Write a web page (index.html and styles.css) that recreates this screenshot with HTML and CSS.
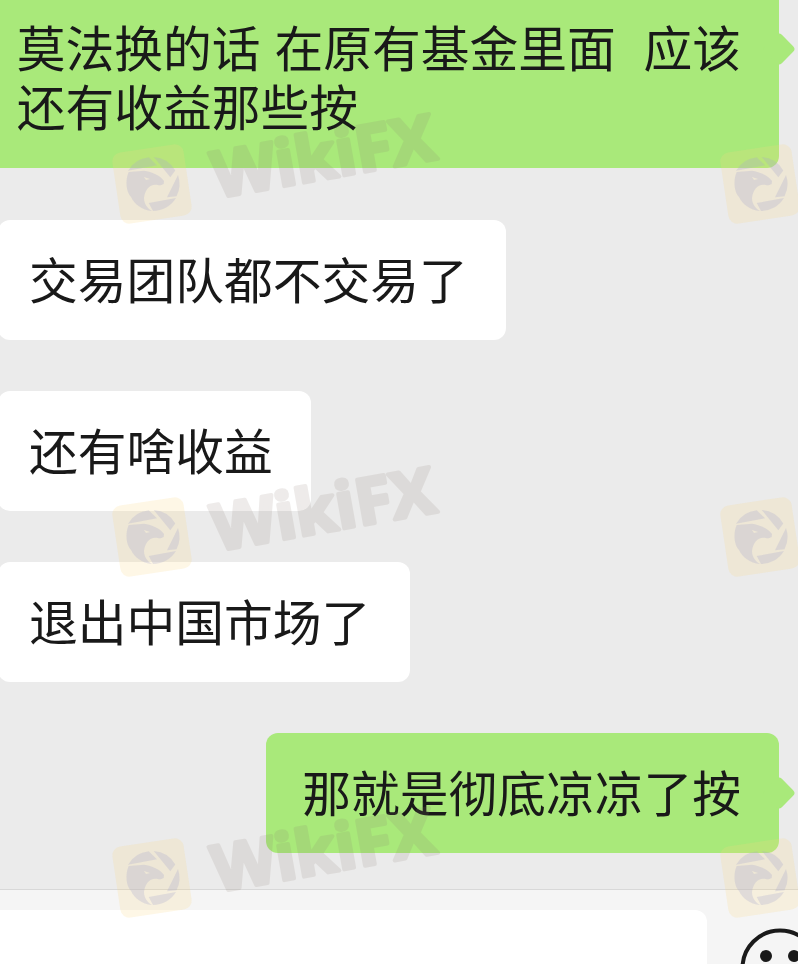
FILE: index.html
```html
<!DOCTYPE html>
<html lang="zh-CN">
<head>
    <meta charset="UTF-8">
    <title>聊天</title>
    <link rel="stylesheet" href="styles.css">
</head>
<body>
<div class="chat">
    <div class="bubble outgoing">莫法换的话 在原有基金里面  应该
还有收益那些按</div>
    <div class="bubble incoming">交易团队都不交易了</div>
    <div class="bubble incoming">还有啥收益</div>
    <div class="bubble incoming roomy">退出中国市场了</div>
    <div class="bubble outgoing">那就是彻底凉凉了按</div>
</div>

<div class="footer">
    <div class="input-box"></div>
    <svg class="smiley" width="80" height="80" viewBox="0 0 80 80">
        <circle cx="40" cy="40" r="37.500" fill="none" stroke="#1a1a1a" stroke-width="4"/>
        <circle cx="26" cy="28" r="6" fill="#1a1a1a"/>
        <circle cx="54" cy="28" r="6" fill="#1a1a1a"/>
    </svg>
</div>

<!-- WikiFX watermark sits over everything -->
<svg class="watermark" width="798" height="964" viewBox="0 0 798 964">
    <defs>
        <g id="wm-logo">
            <rect x="-36" y="-36" width="72" height="72" rx="9" class="wm-plate" transform="rotate(-8.500)"/>
            <path class="wm-mark" fill-rule="evenodd" d="M-24 -13.300A27 27 0 0 1 -3.300 -26.800L5 -18.700ZM1.700 -27A27 27 0 0 1 23.300 -13.500L18.300 -6.700ZM26 -9A27 27 0 0 1 24.500 12.300L15 13.300ZM24 14A27 27 0 0 1 1 27L-3.300 19ZM-23.300 -12L-8 -13.300C0 -12 8 -9 12 -3L11.700 0C8 2 7 1 3.300 .7C-3 1 -7 6 -8 14C-8 20 -4 25 0 27C-10 26 -18 20 -21 13C-26 8 -27 -4 -23.300 -12ZM-8 -7L-2 -5L-6 -4Z"/>
        </g>
        <g id="wm-full">
            <use href="#wm-logo"/>
            <text class="wm-text" textLength="225" lengthAdjust="spacingAndGlyphs" transform="translate(64.500 14) rotate(-10)">WikiFX</text>
        </g>
    </defs>
    <use href="#wm-full" x="152" y="184"/>
    <use href="#wm-full" x="152" y="537"/>
    <use href="#wm-full" x="152" y="878"/>
    <use href="#wm-logo" x="760" y="184"/>
    <use href="#wm-logo" x="760" y="537"/>
    <use href="#wm-logo" x="760" y="878"/>
</svg>
</body>
</html>
```

FILE: styles.css
```css
/* Page */
body {
    margin: 0;
    width: 798px;
    height: 964px;
    overflow: hidden;
    display: flex;
    flex-direction: column;
    background: #ebebeb;
    color: #191919;
    font-family: "Noto Sans CJK SC", "Noto Sans", sans-serif;
}

/* Messages */
.chat {
    height: 900px;
    flex-shrink: 0;
    display: flex;
    flex-direction: column;
    gap: 51px;
    margin-top: -11px;
}

.bubble {
    position: relative;
    white-space: pre;
    font-size: 48.750px;
    word-spacing: 3px;
    line-height: 59px;
    padding: 28px 38px 33px 36px;
    border-radius: 12px;
    flex-shrink: 0;
}

.incoming {
    align-self: flex-start;
    background: #fff;
    margin-left: -2px;
    padding-left: 31px;
}

.roomy {
    padding-right: 40px;
}

.outgoing {
    align-self: flex-end;
    background: #a9e97a;
    margin-right: 19px;
}

.outgoing:first-child {
    margin-bottom: 1px;
    padding-top: 27px;
    padding-bottom: 34px;
}

/* Little arrow beside my own messages */
.outgoing::after {
    content: "";
    position: absolute;
    top: 48px;
    right: -12px;
    width: 24px;
    height: 24px;
    border-radius: 4px;
    background: #a9e97a;
    transform: rotate(45deg);
}

/* Input bar */
.footer {
    flex: 1;
    display: flex;
    gap: 33px;
    padding-top: 20px;
    background: #f5f5f5;
    border-top: 1px solid #d8d8d8;
}

.input-box {
    width: 719px;
    height: 90px;
    flex-shrink: 0;
    margin-left: -12px;
    background: #fff;
    border-radius: 12px;
}

.smiley {
    flex-shrink: 0;
    margin-top: 18px;
}

/* Watermark */
.watermark {
    position: absolute;
    top: 0;
    left: 0;
    pointer-events: none;
}

.wm-plate {
    fill: rgba(250, 215, 130, 0.2);
}

.wm-mark {
    fill: rgba(170, 170, 205, 0.28);
}

.wm-text {
    font-family: "Open Sans", "Liberation Sans", sans-serif;
    font-weight: 700;
    font-size: 64px;
    fill: #8a7a70;
    stroke: #8a7a70;
    stroke-width: 4px;
    stroke-linejoin: round;
    opacity: 0.14;
}
```
